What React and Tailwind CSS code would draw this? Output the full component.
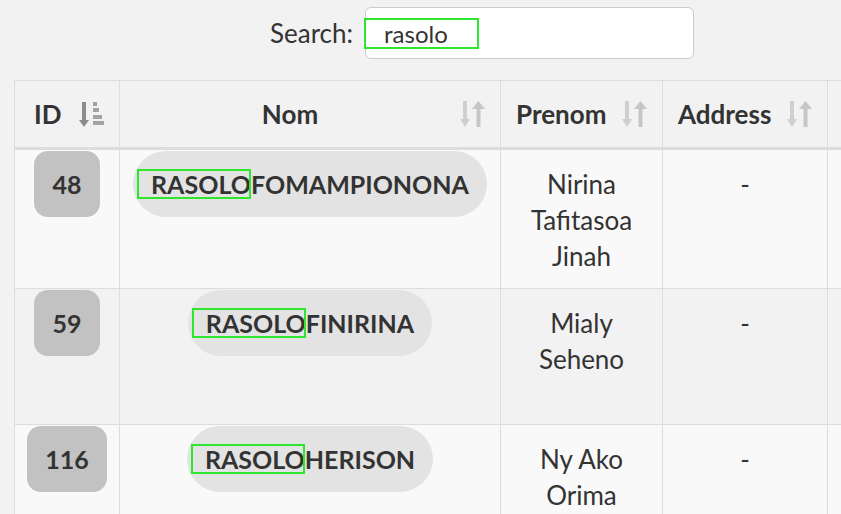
import React from 'react';

const rows = [
  { id: 48, rest: 'FOMAMPIONONA', prenom: ['Nirina', 'Tafitasoa', 'Jinah'], h: 'h-[140px]', bg: 'bg-[#f9f9f9]' },
  { id: 59, rest: 'FINIRINA', prenom: ['Mialy', 'Seheno'], h: 'h-[136px]', bg: 'bg-[#f2f2f2]' },
  { id: 116, rest: 'HERISON', prenom: ['Ny Ako', 'Orima'], h: 'h-[136px]', bg: 'bg-[#f9f9f9]' },
];

const SortBoth = () => (
  <svg width="25" height="26" viewBox="0 0 25 26" className="absolute right-[15px] top-1/2 -translate-y-1/2">
    <rect x="3" y="0" width="4" height="19" fill="#cfcfcf" />
    <polygon points="0,18 10,18 5,26" fill="#cfcfcf" />
    <polygon points="12,8 25,8 18.5,0" fill="#c6c6c6" />
    <rect x="16.5" y="7" width="4" height="19" fill="#c6c6c6" />
  </svg>
);

const SortDesc = () => (
  <svg width="25" height="26" viewBox="0 0 25 26" className="absolute right-[15px] top-1/2 -translate-y-1/2">
    <rect x="3" y="1" width="4" height="19" fill="#8c8c8c" />
    <polygon points="0,19 10,19 5,26" fill="#8c8c8c" />
    <rect x="14" y="1" width="4" height="4" fill="#a3a3a3" />
    <rect x="14" y="7" width="6" height="4" fill="#a3a3a3" />
    <rect x="14" y="14" width="9" height="4" fill="#a3a3a3" />
    <rect x="14" y="20" width="11" height="4" fill="#a3a3a3" />
  </svg>
);

const Mark = ({ children }) => (
  <span className="relative">
    {children}
    <span className="absolute top-0 bottom-0 -left-[14px] right-0 border-2 border-[#2ee62e]" />
  </span>
);

export default function App() {
  return (
    <div className="min-h-screen overflow-hidden bg-[#f2f2f2] text-[#333] font-['Lato',sans-serif] text-[26px]">
      <div className="flex items-center pt-[7px] pl-[270px]">
        <label className="mr-[12px] leading-[36px]">Search:</label>
        <div className="relative">
          <input
            readOnly
            value="rasolo"
            className="w-[329px] h-[52px] rounded-[6px] border border-[#ccc] bg-white pl-[18px] text-[24px] text-[#333] outline-none"
          />
          <span className="absolute left-[-1px] top-[11px] w-[115px] h-[31px] border-2 border-[#2ee62e]" />
        </div>
      </div>

      <table className="ml-[14px] mt-[21px] table-fixed border-collapse w-[1000px] leading-[36px]">
        <colgroup>
          <col className="w-[105px]" />
          <col className="w-[381px]" />
          <col className="w-[162px]" />
          <col className="w-[165px]" />
          <col />
        </colgroup>
        <thead>
          <tr className="h-[68px] bg-[#f2f2f2] font-bold">
            <th className="relative border border-[#ddd] border-b-[3px] pl-[19px] text-left">ID<SortDesc /></th>
            <th className="relative border border-[#ddd] border-b-[3px] pl-[20px] pr-[60px] text-center">Nom<SortBoth /></th>
            <th className="relative border border-[#ddd] border-b-[3px] pl-[15px] text-left">Prenom<SortBoth /></th>
            <th className="relative border border-[#ddd] border-b-[3px] pl-[15px] text-left">Address<SortBoth /></th>
            <th className="border border-[#ddd] border-b-[3px]"></th>
          </tr>
        </thead>
        <tbody>
          {rows.map((r) => (
            <tr key={r.id} className={`${r.h} ${r.bg}`}>
              <td className="border border-[#ddd] align-top pt-[16px] text-center font-bold text-[25px]">
                <span className="rounded-[14px] bg-[#c2c2c2] px-[18px] py-[18px]">{r.id}</span>
              </td>
              <td className="border border-[#ddd] align-top pt-[16px] text-center font-bold text-[25px]">
                <span className="rounded-full bg-[#e3e3e3] px-[18px] py-[18px]">
                  <Mark>RASOLO</Mark>{r.rest}
                </span>
              </td>
              <td className="border border-[#ddd] align-top pt-[16px] text-center">
                {r.prenom.map((p) => (
                  <div key={p}>{p}</div>
                ))}
              </td>
              <td className="border border-[#ddd] align-top pt-[16px] text-center">-</td>
              <td className="border border-[#ddd]"></td>
            </tr>
          ))}
        </tbody>
      </table>
    </div>
  );
}
